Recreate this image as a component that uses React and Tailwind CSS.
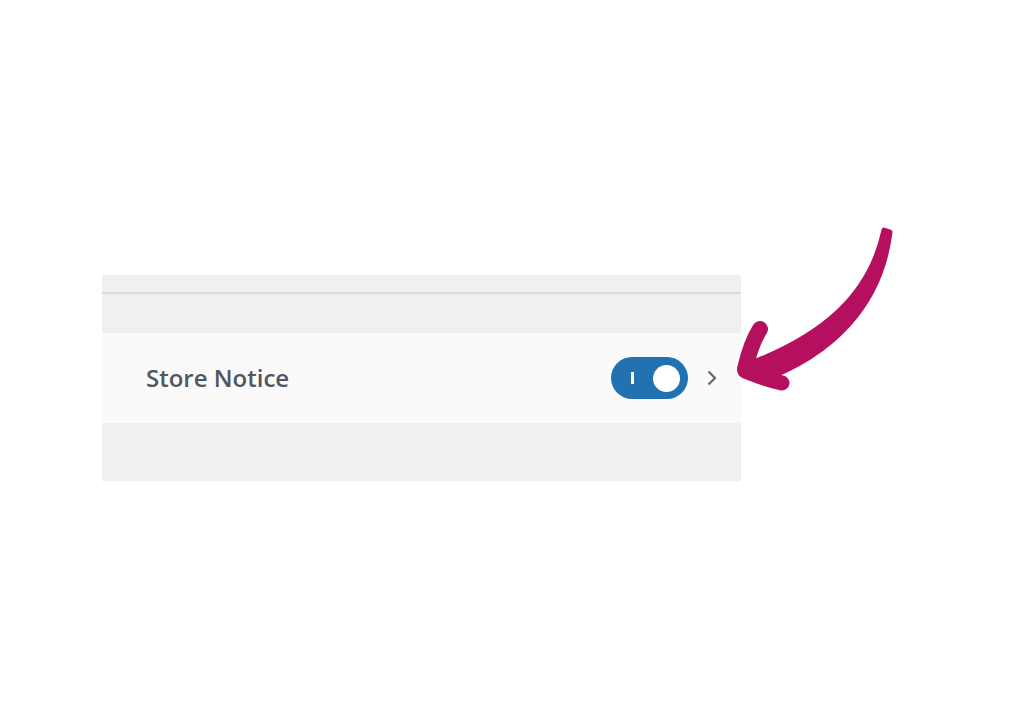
export default function App() {
  return (
    <div className="relative w-[1024px] h-[724px] bg-white overflow-hidden">
      <div className="pt-[275px] pl-[102px]">
        <div className="w-[639px] h-[206px] bg-[#f0f0f0] flex flex-col">
          <div className="h-[17px]" />
          <div className="h-[2px] bg-[#dcdcdc]" />
          <div className="h-[39px]" />
          <div className="h-[90px] bg-[#fafafa] flex items-center pl-[44px] pr-[24px]">
            <span
              className="text-[24px] font-semibold text-[#50575e] flex-1 leading-none"
              style={{ fontFamily: '"Open Sans", "Noto Sans", sans-serif' }}
            >
              Store Notice
            </span>
            <div className="w-[77px] h-[42px] rounded-full bg-[#2271b1] flex items-center pl-[20px] pr-[8px]">
              <div className="w-[3px] h-[12px] bg-white" />
              <div className="flex-1" />
              <div className="w-[27px] h-[27px] rounded-full bg-white" />
            </div>
            <svg className="ml-[18px]" width="11" height="16" viewBox="0 0 11 16">
              <path d="M2.5 1.5 L9 8 L2.5 14.5" fill="none" stroke="#646970" strokeWidth="2.2" />
            </svg>
          </div>
        </div>
      </div>

      {/* pointer arrow */}
      <svg className="absolute left-0 top-0" width="1024" height="724" viewBox="0 0 1024 724">
        <g fill="#b5105f" stroke="#b5105f" strokeLinecap="round" strokeLinejoin="round">
          <path
            d="M884 230 C870 296 822 336 751 363 L760 381 C832 355 881 306 890 232 Z"
            strokeWidth="5"
          />
          <path d="M745 369 C748 356 753 340 760 329" fill="none" strokeWidth="16" />
          <path d="M745 371 C758 376 770 381 782 383" fill="none" strokeWidth="15" />
        </g>
      </svg>
    </div>
  )
}
